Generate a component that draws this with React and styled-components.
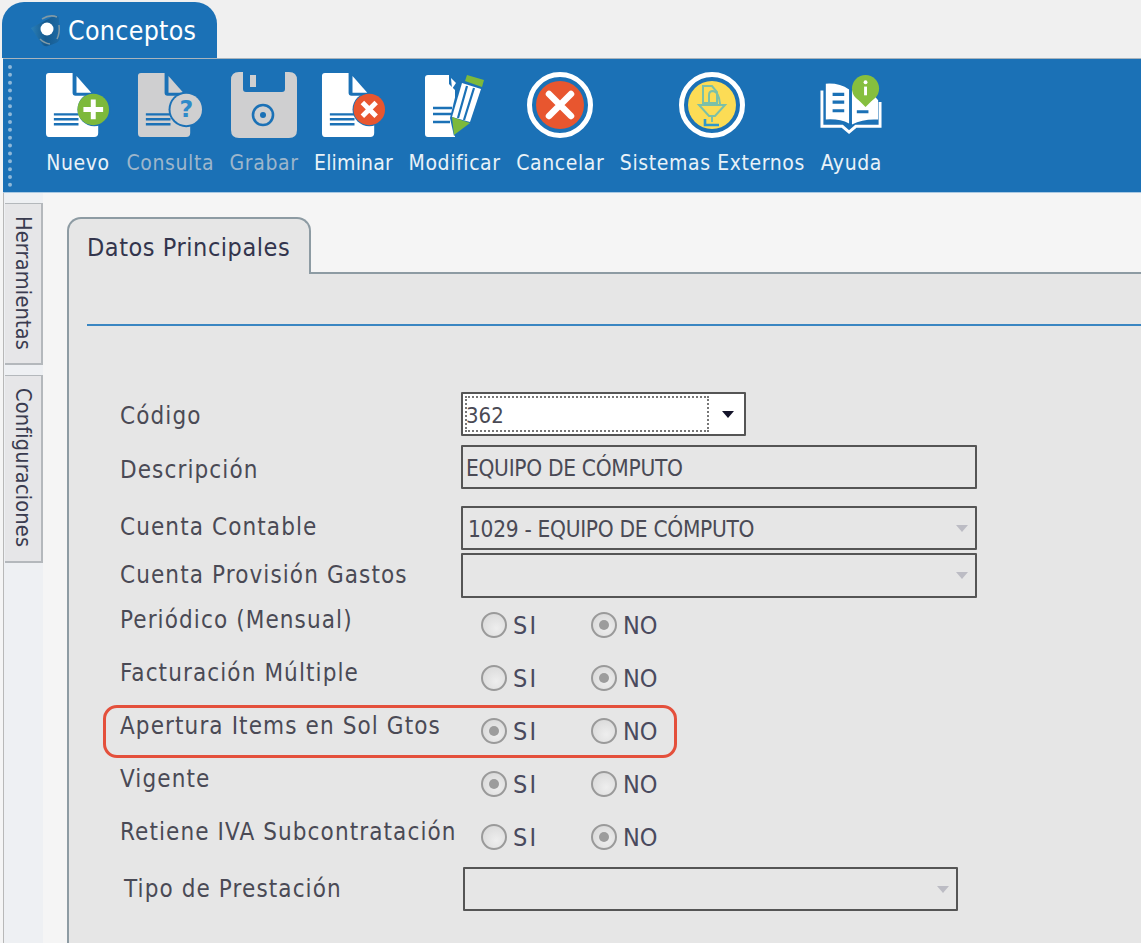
import styled, { createGlobalStyle } from "styled-components"

const BLUE = '#1b71b6'
const GRAY = '#cfcfd0'

const Global = createGlobalStyle`
    html, body { margin: 0; padding: 0; background: #f5f5f5; }
    body { width: 1141px; height: 943px; overflow: hidden; font-family: "DejaVu Sans Condensed", "DejaVu Sans", sans-serif; }
`

const Doc = ({ fill }) => <>
    <path d="M4 1H28V21Q28 24 31 24H54V62Q54 66 50 66H4Q1 66 1 62V4Q1 1 4 1Z" fill={fill} />
    <path d="M32 4L47 21H32Z" fill={fill} />
    <path d="M9 43H34M9 48H34M9 53H34" stroke={BLUE} strokeWidth="2.4" />
</>

const NewIcon = () => <svg width="66" height="66" viewBox="0 0 67 67">
    <Doc fill="#fff" />
    <circle cx="50" cy="38" r="17" fill={BLUE} />
    <circle cx="49" cy="38" r="16" fill="#7db93b" />
    <path d="M49 28V48M39 38H59" stroke="#fff" strokeWidth="5" />
</svg>

const QueryIcon = () => <svg width="66" height="66" viewBox="0 0 67 67">
    <Doc fill={GRAY} />
    <circle cx="50" cy="38" r="18" fill={BLUE} />
    <circle cx="50" cy="38" r="16" fill={GRAY} />
    <text x="50" y="46" textAnchor="middle" fontSize="24" fontWeight="700" fill="#2e8ac9" fontFamily="DejaVu Sans">?</text>
</svg>

const SaveIcon = () => <svg width="66" height="66" viewBox="0 0 66 66">
    <path d="M8 0H12V17Q12 20 15 20H51Q54 20 54 17V0H58Q66 0 66 8V58Q66 66 58 66H8Q0 66 0 58V8Q0 0 8 0Z" fill={GRAY} />
    <rect x="19" y="3" width="6" height="12" fill={GRAY} />
    <circle cx="32" cy="43" r="10" fill="none" stroke={BLUE} strokeWidth="2.6" />
    <circle cx="32" cy="43" r="3" fill={BLUE} />
</svg>

const DeleteIcon = () => <svg width="66" height="66" viewBox="0 0 67 67">
    <Doc fill="#fff" />
    <circle cx="49" cy="38" r="17" fill={BLUE} />
    <circle cx="49" cy="38" r="16" fill="#e8562f" />
    <path d="M42 31L56 45M56 31L42 45" stroke="#fff" strokeWidth="5" />
</svg>

const EditIcon = () => <svg width="62" height="66" viewBox="0 0 62 66">
    <path d="M4 3H25V12L31 18V65H4Q1 65 1 62V6Q1 3 4 3Z" fill="#fff" />
    <path d="M27 6L32 11L28 17Z" fill="#fff" />
    <path d="M9 36H28M9 42H28M9 50H26" stroke={BLUE} strokeWidth="2.6" />
    <path d="M35 9L60 17L47 53L30 64L26 46Z" fill={BLUE} />
    <path d="M38 11L57 17L46 50L28 45Z" fill="#fff" />
    <path d="M43 14L34 46M50 16L40 48" stroke={BLUE} strokeWidth="2.2" />
    <path d="M43 3L60 8L58 15L41 9Z" fill="#7db93b" />
    <path d="M28 45L46 51L30 63Z" fill="#7db93b" />
</svg>

const CancelIcon = () => <svg width="66" height="66" viewBox="0 0 66 66">
    <circle cx="33" cy="33" r="30.5" fill={BLUE} stroke="#fff" strokeWidth="5" />
    <circle cx="33" cy="33" r="24" fill="#e8562f" />
    <path d="M22 22L44 44M44 22L22 44" stroke="#fff" strokeWidth="6.5" strokeLinecap="round" />
</svg>

const ExternalIcon = () => <svg width="66" height="66" viewBox="0 0 66 66">
    <circle cx="33" cy="33" r="30.5" fill={BLUE} stroke="#fff" strokeWidth="5" />
    <circle cx="33" cy="33" r="24" fill="#fcdc55" />
    <g fill="none" stroke="#7cc0a8" strokeWidth="2">
        <path d="M24 14H33L38 20V31H24Z" />
        <path d="M30 31V23Q30 19 34 19Q40 20 41 32" />
        <path d="M20 33H46L36 44H30Z" />
        <path d="M33 44V50" />
        <path d="M26 47V53H40" stroke="#2f97c9" strokeWidth="2.6" />
    </g>
</svg>

const HelpIcon = () => <svg width="62" height="66" viewBox="0 0 64 66">
    <path d="M2 18V55H23L30 61L37 55H62V30" fill="none" stroke="#fff" strokeWidth="3" />
    <path d="M6 11Q20 10 30 17V52Q20 47 6 48Z" fill="#fff" />
    <path d="M33 18Q38 13 46 12L60 28V48Q45 47 33 53Z" fill="#fff" />
    <path d="M13 22H25M13 30H25M13 39H25M38 40H50" stroke={BLUE} strokeWidth="3.2" />
    <circle cx="47" cy="16" r="14" fill="#86bf3e" />
    <path d="M39 27L47 35L55 27Z" fill="#86bf3e" />
    <path d="M47 14V23" stroke="#fff" strokeWidth="3" />
    <circle cx="47" cy="9.5" r="2" fill="#fff" />
</svg>

const Logo = () => <svg width="34" height="34" viewBox="0 0 34 34">
    <defs>
        <linearGradient id="logoFill" x1="0" y1="0" x2="1" y2="0">
            <stop offset="0" stopColor="#2a7fb8" />
            <stop offset="0.5" stopColor="#155a8f" />
            <stop offset="1" stopColor="#1d6aa5" />
        </linearGradient>
    </defs>
    <path d="M1 15L24 3Q29 1 29 7L30 24Q30 28 26 30L18 33Q14 34 12 31Z" fill="url(#logoFill)" />
    <path d="M12 6Q20 1 27 4M29 12Q30 20 27 26M10 26Q14 30 20 31" stroke="#7f99a6" strokeWidth="1.5" fill="none" />
    <circle cx="17" cy="16" r="6.5" fill="#fff" />
</svg>

const tools = [
    { label: 'Nuevo', Icon: NewIcon },
    { label: 'Consulta', Icon: QueryIcon, disabled: true },
    { label: 'Grabar', Icon: SaveIcon, disabled: true },
    { label: 'Eliminar', Icon: DeleteIcon, tight: true },
    { label: 'Modificar', Icon: EditIcon },
    { label: 'Cancelar', Icon: CancelIcon },
    { label: 'Sistemas Externos', Icon: ExternalIcon },
    { label: 'Ayuda', Icon: HelpIcon },
]

const fields = [
    { label: 'Periódico (Mensual)', value: 'NO' },
    { label: 'Facturación Múltiple', value: 'NO' },
    { label: 'Apertura Items en Sol Gtos', value: 'SI', marked: true },
    { label: 'Vigente', value: 'SI' },
    { label: 'Retiene IVA Subcontratación', value: 'NO' },
]

const RadioGroup = ({ value }) => <Radios>
    <RadioOption><Radio checked={value === 'SI'} /><RadioText>S I</RadioText></RadioOption>
    <RadioOption><Radio checked={value === 'NO'} /><RadioText>NO</RadioText></RadioOption>
</Radios>

export default function App () {
    return <>
        <Global />
        <TabStrip>
            <TitleTab><Logo /><Title>Conceptos</Title></TitleTab>
        </TabStrip>
        <Toolbar>
            <Grip />
            { tools.map(({ label, Icon, disabled, tight }) => (
                <Tool key={label}>
                    <Icon />
                    <ToolLabel disabled={disabled} tight={tight}>{label}</ToolLabel>
                </Tool>
            )) }
        </Toolbar>
        <Body>
            <Rail>
                <RailTab h={162}><RailText>Herramientas</RailText></RailTab>
                <RailTab h={188}><RailText>Configuraciones</RailText></RailTab>
            </Rail>
            <Main>
                <PanelHead>
                    <PanelTab>Datos Principales</PanelTab>
                    <HeadRule />
                </PanelHead>
                <Panel>
                    <Divider />
                    <Form>
                        <Row h={44} mb={9}>
                            <Label drop={4}>Código</Label>
                            <Select w={285} active>
                                <Focus>362</Focus>
                                <Arrow dark />
                            </Select>
                        </Row>
                        <Row h={44} mb={17}>
                            <Label drop={6}>Descripción</Label>
                            <Select w={516}><Value>EQUIPO DE CÓMPUTO</Value></Select>
                        </Row>
                        <Row h={44} mb={3}>
                            <Label drop={-2}>Cuenta Contable</Label>
                            <Select w={516}><Value indent>1029 - EQUIPO DE CÓMPUTO</Value><Arrow /></Select>
                        </Row>
                        <Row h={45} mb={10}>
                            <Label drop={-2}>Cuenta Provisión Gastos</Label>
                            <Select w={516}><Value /><Arrow /></Select>
                        </Row>
                        { fields.map(({ label, value, marked }) => (
                            <RadioRow key={label} marked={marked}>
                                <RadioLabel>{label}</RadioLabel>
                                <RadioGroup value={value} />
                            </RadioRow>
                        )) }
                        <LastRow>
                            <LastLabel>Tipo de Prestación</LastLabel>
                            <Select w={495}><Value /><Arrow /></Select>
                        </LastRow>
                    </Form>
                </Panel>
            </Main>
        </Body>
    </>
}

const TabStrip = styled.div`
    height: 58px;
    padding: 2px 0 0 2px;
    box-sizing: border-box;
    background: #f0f0f0;
`

const TitleTab = styled.div`
    display: flex;
    align-items: center;
    gap: 4px;
    width: 215px;
    height: 56px;
    box-sizing: border-box;
    padding: 0 0 0 28px;
    background: ${BLUE};
    border-radius: 22px 22px 0 0;
`

const Title = styled.span`
    padding-top: 3px;
    color: #fff;
    font-size: 26.5px;
    line-height: 1;
    letter-spacing: 0.3px;
`

const Toolbar = styled.div`
    display: flex;
    gap: 15.5px;
    height: 135px;
    box-sizing: border-box;
    margin-left: 3px;
    padding: 13px 0 0 5px;
    background: ${BLUE};
    border-top: 1px solid #a9b4bd;
    border-bottom: 1px solid #a9c9e3;
`

const Grip = styled.div`
    align-self: flex-start;
    height: 122px;
    margin: -7px 17.5px 0 0;
    border-left: 4px dotted #8fb8d8;
`

const Tool = styled.div`
    display: flex;
    flex-direction: column;
    align-items: center;
    gap: 12px;
`

const ToolLabel = styled.span`
    color: ${(props) => props.disabled ? '#9db6cb' : '#e9f2f8'};
    font-size: 21px;
    line-height: 26px;
    letter-spacing: ${(props) => props.tight ? '0.2px' : '0.6px'};
    white-space: nowrap;
`

const Body = styled.div`
    display: flex;
    height: 750px;
    margin-left: 3px;
    border-left: 1px solid #b8b8b8;
`

const Rail = styled.div`
    display: flex;
    flex-direction: column;
    gap: 10px;
    width: 39px;
    padding-top: 10px;
    background: #eef0f3;
    flex-shrink: 0;
`

const RailTab = styled.div`
    display: flex;
    justify-content: center;
    height: ${(props) => props.h}px;
    box-sizing: border-box;
    margin-left: 1px;
    padding-top: 12px;
    background: #e6e6e8;
    border: 1px solid #b4b8bc;
    border-left: none;
    border-bottom-width: 2px;
    border-right-width: 2px;
`

const RailText = styled.span`
    writing-mode: vertical-rl;
    color: #3a3c50;
    font-size: 21.5px;
    line-height: 1;
    letter-spacing: 0.2px;
`

const Main = styled.div`
    flex: 1;
    padding: 24px 0 0 24px;
    background: #f5f5f5;
`

const PanelHead = styled.div`
    display: flex;
    align-items: flex-end;
    height: 57px;
`

const PanelTab = styled.div`
    width: 244px;
    height: 57px;
    box-sizing: border-box;
    padding: 14px 0 0 18px;
    background: #e6e6e6;
    border: 2px solid #8d9ba3;
    border-bottom: none;
    border-radius: 14px 14px 0 0;
    color: #33354d;
    font-size: 25px;
    line-height: 30px;
    letter-spacing: 0.55px;
    white-space: nowrap;
`

const HeadRule = styled.div`
    flex: 1;
    border-bottom: 2px solid #8d9ba3;
`

const Panel = styled.div`
    height: 670px;
    box-sizing: border-box;
    padding: 50px 0 0 18px;
    background: #e6e6e6;
    border-left: 2px solid #8d9ba3;
`

const Divider = styled.div`
    height: 2px;
    background: #3a86c2;
`

const Form = styled.div`
    display: flex;
    flex-direction: column;
    padding: 66px 0 0 33px;
`

const Row = styled.div`
    display: flex;
    align-items: center;
    height: ${(props) => props.h}px;
    margin-bottom: ${(props) => props.mb}px;
`

const Label = styled.span`
    width: 341px;
    flex-shrink: 0;
    margin-top: ${(props) => props.drop || 0}px;
    color: #4a4a55;
    font-size: 24px;
    line-height: 1;
    letter-spacing: 1.1px;
    white-space: nowrap;
`

const Select = styled.div`
    display: flex;
    align-items: center;
    width: ${(props) => props.w}px;
    height: 100%;
    box-sizing: border-box;
    padding: 0 10px 0 2px;
    background: ${(props) => props.active ? '#fff' : 'transparent'};
    border: 2px solid #555;
    border-radius: 1px;
`

const Focus = styled.div`
    display: flex;
    align-items: center;
    width: 244px;
    height: 36px;
    box-sizing: border-box;
    padding-top: 2px;
    text-indent: -1px;
    border: 2px dotted #777;
    color: #4a4a55;
    font-size: 22px;
`

const Value = styled.div`
    flex: 1;
    padding-top: 1px;
    padding-left: ${(props) => props.indent ? '3px' : '1px'};
    color: #4a4a55;
    font-size: 22.5px;
    letter-spacing: -0.3px;
    white-space: nowrap;
`

const Arrow = styled.span`
    width: 0;
    height: 0;
    margin-left: auto;
    margin-right: ${(props) => props.dark ? '0' : '-3px'};
    border-top: 7px solid ${(props) => props.dark ? '#14142a' : '#bcbcc4'};
    border-left: 6px solid transparent;
    border-right: 6px solid transparent;
`

const RadioRow = styled.div`
    position: relative;
    display: flex;
    height: 53px;
    align-items: flex-start;

    ${(props) => props.marked && `
        &::after {
            content: '';
            position: absolute;
            left: -17px;
            top: -9px;
            width: 574px;
            height: 53px;
            box-sizing: border-box;
            border: 3px solid #e4503c;
            border-radius: 14px;
        }
    `}
`

const RadioLabel = styled.span`
    width: 361px;
    flex-shrink: 0;
    margin-top: -3px;
    color: #4a4a55;
    font-size: 24px;
    line-height: 30px;
    letter-spacing: 1.1px;
    white-space: nowrap;
`

const Radios = styled.div`
    display: flex;
    padding-top: 2px;
`

const RadioOption = styled.div`
    display: flex;
    align-items: center;
    gap: 6px;
    width: 110px;
`

const Radio = styled.span`
    display: flex;
    align-items: center;
    justify-content: center;
    width: 26px;
    height: 26px;
    box-sizing: border-box;
    background: radial-gradient(circle at 60% 65%, #eee, #d6d6d6);
    border: 2px solid #9a9a9a;
    border-radius: 50%;

    &::before {
        content: '';
        width: 10px;
        height: 10px;
        border-radius: 50%;
        background: ${(props) => props.checked ? '#9c9c9c' : 'transparent'};
    }
`

const RadioText = styled.span`
    padding-top: 3px;
    color: #4a4a5e;
    font-size: 25px;
    line-height: 26px;
    white-space: nowrap;
    word-spacing: -5px;
`

const LastRow = styled.div`
    display: flex;
    align-items: center;
    height: 44px;
    margin-top: -6px;
`

const LastLabel = styled(Label)`
    width: 343px;
    padding-left: 4px;
    box-sizing: border-box;
`
